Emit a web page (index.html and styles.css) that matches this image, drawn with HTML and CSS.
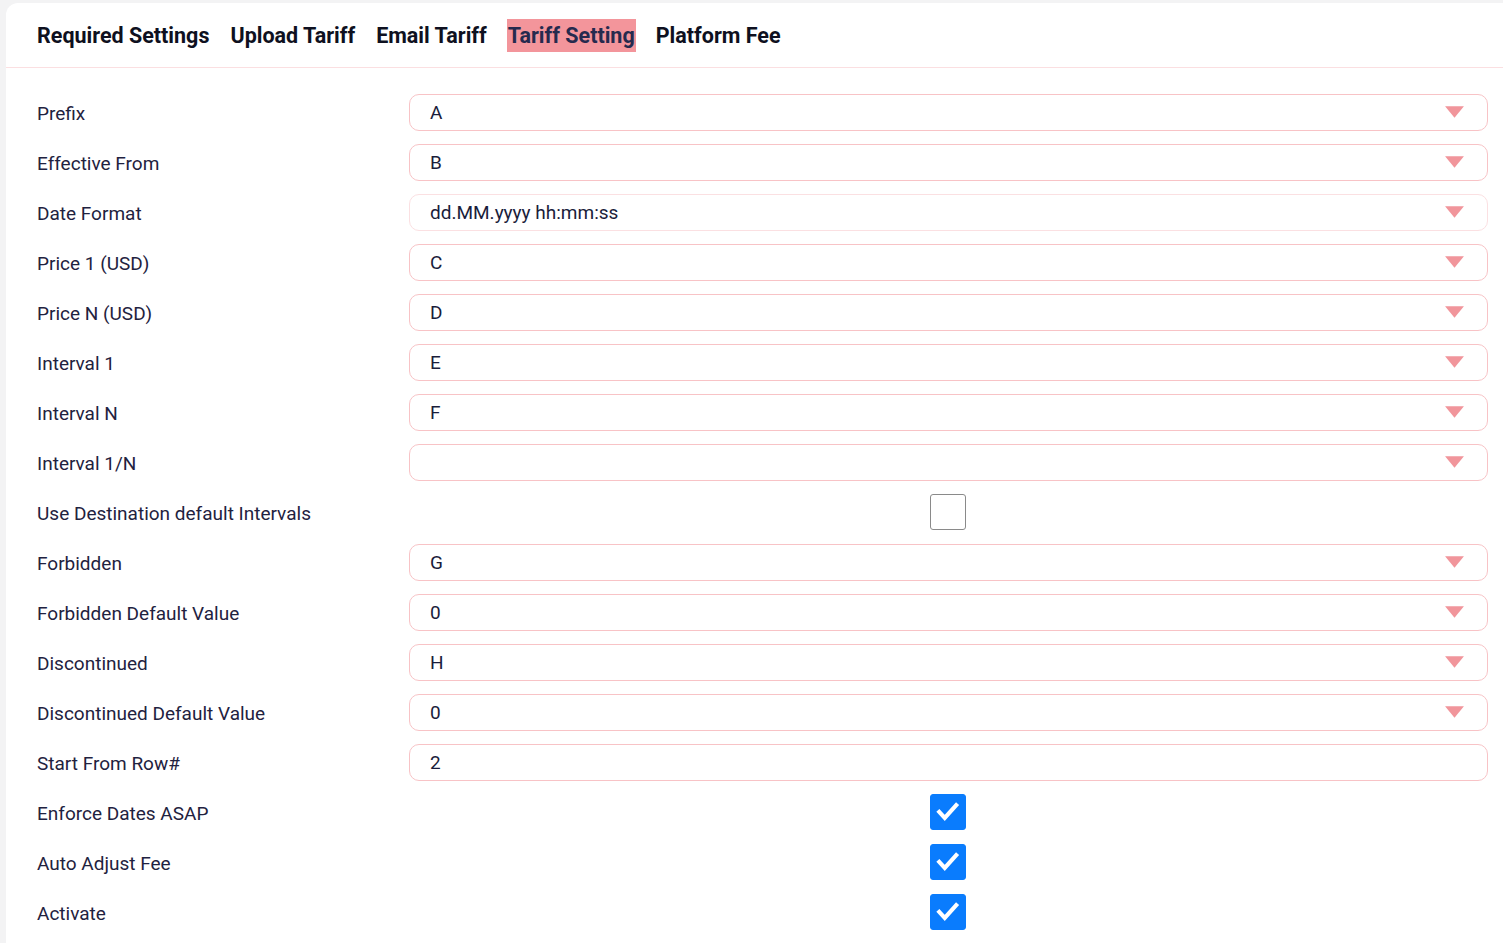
FILE: index.html
```html
<!DOCTYPE html>
<html lang="en">
<head>
  <meta charset="UTF-8"/>
  <title>Tariff Setting</title>
  <link rel="stylesheet" href="styles.css">
</head>
<body>
  <div class="card">
    <div class="tabs">
      <span class="tab">Required Settings</span>
      <span class="tab">Upload Tariff</span>
      <span class="tab">Email Tariff</span>
      <span class="tab active">Tariff Setting</span>
      <span class="tab">Platform Fee</span>
    </div>

    <div class="form">
      <label>Prefix</label>
      <div class="field select"><span>A</span><svg class="arrow" viewBox="0 0 20 13"><path d="M1 1h18l-9 11z"/></svg></div>

      <label>Effective From</label>
      <div class="field select"><span>B</span><svg class="arrow" viewBox="0 0 20 13"><path d="M1 1h18l-9 11z"/></svg></div>

      <label>Date Format</label>
      <div class="field select soft"><span>dd.MM.yyyy hh:mm:ss</span><svg class="arrow" viewBox="0 0 20 13"><path d="M1 1h18l-9 11z"/></svg></div>

      <label>Price 1 (USD)</label>
      <div class="field select"><span>C</span><svg class="arrow" viewBox="0 0 20 13"><path d="M1 1h18l-9 11z"/></svg></div>

      <label>Price N (USD)</label>
      <div class="field select"><span>D</span><svg class="arrow" viewBox="0 0 20 13"><path d="M1 1h18l-9 11z"/></svg></div>

      <label>Interval 1</label>
      <div class="field select"><span>E</span><svg class="arrow" viewBox="0 0 20 13"><path d="M1 1h18l-9 11z"/></svg></div>

      <label>Interval N</label>
      <div class="field select"><span>F</span><svg class="arrow" viewBox="0 0 20 13"><path d="M1 1h18l-9 11z"/></svg></div>

      <label>Interval 1/N</label>
      <div class="field select"><span></span><svg class="arrow" viewBox="0 0 20 13"><path d="M1 1h18l-9 11z"/></svg></div>

      <label>Use Destination default Intervals</label>
      <div class="check-cell"><span class="checkbox"></span></div>

      <label>Forbidden</label>
      <div class="field select"><span>G</span><svg class="arrow" viewBox="0 0 20 13"><path d="M1 1h18l-9 11z"/></svg></div>

      <label>Forbidden Default Value</label>
      <div class="field select"><span>0</span><svg class="arrow" viewBox="0 0 20 13"><path d="M1 1h18l-9 11z"/></svg></div>

      <label>Discontinued</label>
      <div class="field select"><span>H</span><svg class="arrow" viewBox="0 0 20 13"><path d="M1 1h18l-9 11z"/></svg></div>

      <label>Discontinued Default Value</label>
      <div class="field select"><span>0</span><svg class="arrow" viewBox="0 0 20 13"><path d="M1 1h18l-9 11z"/></svg></div>

      <label>Start From Row#</label>
      <div class="field"><span>2</span></div>

      <label>Enforce Dates ASAP</label>
      <div class="check-cell"><span class="checkbox checked"><svg viewBox="0 0 36 36"><path d="M9 18.5l6 6.5L27.5 11"/></svg></span></div>

      <label>Auto Adjust Fee</label>
      <div class="check-cell"><span class="checkbox checked"><svg viewBox="0 0 36 36"><path d="M9 18.5l6 6.5L27.5 11"/></svg></span></div>

      <label>Activate</label>
      <div class="check-cell"><span class="checkbox checked"><svg viewBox="0 0 36 36"><path d="M9 18.5l6 6.5L27.5 11"/></svg></span></div>
    </div>
  </div>
</body>
</html>
```

FILE: styles.css
```css
html, body {
  margin: 0;
  height: 100%;
  overflow: hidden;
}

body {
  background: #f3f3f4;
  font-family: Roboto, "Liberation Sans", sans-serif;
  color: #1f2240;
  padding: 3px 0 0 6px;
  box-sizing: border-box;
}

.card {
  background: #fff;
  border-radius: 12px 0 0 0;
  min-height: 100%;
}

.tabs {
  display: flex;
  align-items: center;
  gap: 19px;
  height: 64px;
  padding: 0 0 0 30px;
  border-bottom: 1px solid #fbdfe1;
}

.tab {
  font-size: 21.5px;
  font-weight: 700;
  color: #0e1020;
  line-height: 33px;
  padding: 0 1px;
}

.tab.active {
  background: #f3959b;
  color: #262a4e;
}

.form {
  display: grid;
  grid-template-columns: 372px 1fr;
  grid-auto-rows: 50px;
  align-items: center;
  padding: 19px 15px 0 31px;
}

.form label {
  font-size: 19px;
  color: #1f2240;
  padding-top: 2px;
}

.field {
  height: 37px;
  box-sizing: border-box;
  border: 1px solid #f8c3c6;
  border-radius: 10px;
  display: flex;
  align-items: center;
  justify-content: space-between;
  padding: 0 22px 0 20px;
  font-size: 19px;
  color: #1a1d3b;
}

.field span {
  padding-top: 1px;
}

.field.soft {
  border-color: #fbe0e2;
}

.arrow {
  width: 21px;
  height: 14px;
  fill: #f1959b;
}

.check-cell {
  display: flex;
  justify-content: center;
  padding-right: 2px;
}

.checkbox {
  width: 36px;
  height: 36px;
  box-sizing: border-box;
  border: 1.5px solid #8a8a8a;
  border-radius: 3px;
  display: block;
}

.checkbox.checked {
  background: #0a7cfd;
  border-color: #0a7cfd;
}

.checkbox svg {
  display: block;
  width: 33px;
  height: 33px;
  fill: none;
  stroke: #fff;
  stroke-width: 4.5;
  stroke-linecap: square;
}
```
